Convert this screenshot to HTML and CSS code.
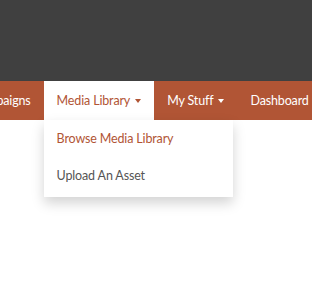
FILE: index.html
```html
<!DOCTYPE html>
<html lang="en">
<head>
    <meta charset="UTF-8">
    <meta name="viewport" content="width=device-width, initial-scale=1.0">
    <title>Media Library</title>
    <link rel="stylesheet" href="styles.css">
</head>
<body>

<!-- Top bar -->
<div class="topbar"></div>

<!-- Main navigation -->
<nav class="navbar">
    <ul class="nav">
        <li class="nav-item first"><a href="#">Campaigns</a></li>
        <li class="nav-item open">
            <a href="#">Media Library <span class="caret"></span></a>
            <ul class="dropdown">
                <li><a href="#" class="active">Browse Media Library</a></li>
                <li><a href="#">Upload An Asset</a></li>
            </ul>
        </li>
        <li class="nav-item"><a href="#">My Stuff <span class="caret"></span></a></li>
        <li class="nav-item"><a href="#">Dashboard</a></li>
    </ul>
</nav>

</body>
</html>
```

FILE: styles.css
```css
html, body {
    height: 100%;
}
body {
    margin: 0;
    font-family: Lato, "Open Sans", sans-serif;
    font-size: 12.5px;
    letter-spacing: -0.15px;
    background: #fff;
}
.topbar {
    height: 81px;
    background-color: #404040;
}
.navbar {
    background-color: #b15535;
    height: 39px;
}
.nav {
    list-style: none;
    margin: 0;
    padding: 0;
    display: flex;
    white-space: nowrap;
}
.nav-item {
    position: relative;
}
.nav-item.first {
    margin-left: -41px;
}
.nav-item > a {
    display: flex;
    align-items: center;
    height: 39px;
    padding: 0 13px;
    color: #fff;
    text-decoration: none;
}
.nav-item.open > a {
    background-color: #fff;
    color: #b15535;
}
.caret {
    display: inline-block;
    width: 0;
    height: 0;
    margin-left: 5px;
    border-top: 4px solid;
    border-left: 3px solid transparent;
    border-right: 3px solid transparent;
}
.dropdown {
    position: absolute;
    top: 39px;
    left: 0;
    z-index: 10;
    width: 189px;
    margin: 0;
    padding: 0 0 3px;
    list-style: none;
    background: #fff;
    box-shadow: 0 6px 12px rgba(0, 0, 0, 0.175);
}
.dropdown a {
    display: block;
    padding: 0 13px;
    line-height: 37px;
    color: #555;
    text-decoration: none;
}
.dropdown a.active {
    color: #b15535;
}
```
